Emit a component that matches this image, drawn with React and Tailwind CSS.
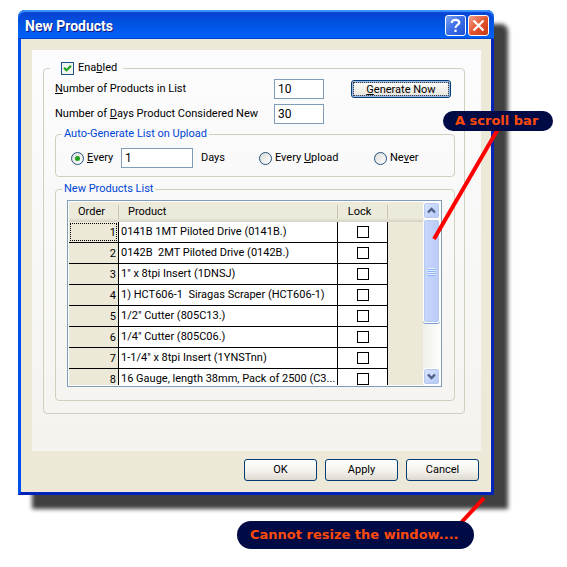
import React, { useState } from 'react';

const PRODUCTS = [
  '0141B 1MT Piloted Drive (0141B.)',
  '0142B  2MT Piloted Drive (0142B.)',
  '1" x 8tpi Insert (1DNSJ)',
  '1) HCT606-1  Siragas Scraper (HCT606-1)',
  '1/2" Cutter (805C13.)',
  '1/4" Cutter (805C06.)',
  '1-1/4" x 8tpi Insert (1YNSTnn)',
  '16 Gauge, length 38mm, Pack of 2500 (C3...',
];

const TextBox = ({ id, className, ...props }) => (
  <input
    id={id}
    type="text"
    className={`h-5 border border-[#7f9db9] bg-white pl-[3px] text-[12px] outline-none ${className}`}
    {...props}
  />
);

const Radio = ({ value, selected, onSelect, className, children }) => (
  <label className={`flex items-center gap-[3px] ${className}`}>
    <span className="grid h-[13px] w-[13px] shrink-0 place-items-center">
      <input
        type="radio"
        name="frequency"
        value={value}
        checked={selected === value}
        onChange={() => onSelect(value)}
        className="col-start-1 row-start-1 h-[13px] w-[13px] appearance-none rounded-full border border-[#21527f] bg-linear-to-br from-[#dcdcd7] to-white"
      />
      {selected === value && (
        <span className="pointer-events-none col-start-1 row-start-1 h-[5px] w-[5px] rounded-full bg-[#21a121]"></span>
      )}
    </span>
    <span>{children}</span>
  </label>
);

const Group = ({ title, className, children }) => (
  <fieldset className={`rounded-[4px] border border-[#d0d0bf] px-[6px] ${className}`}>
    <legend className="h-[14px] px-[2px] leading-[14px] text-[#0046d5]">{title}</legend>
    {children}
  </fieldset>
);

const DialogButton = ({ children }) => (
  <button
    type="button"
    className="h-[22px] w-[73px] rounded-[3px] border border-[#003c74] bg-linear-to-b from-white via-[#f5f4ef] to-[#dedad0]"
  >
    {children}
  </button>
);

const ScrollArrow = ({ label, d }) => (
  <button
    type="button"
    aria-label={label}
    className="grid h-[17px] w-[17px] shrink-0 place-items-center rounded-[3px] border border-white bg-linear-to-br from-[#dbe5ff] to-[#b3c7f7] ring-1 ring-[#b8c9ee] ring-inset"
  >
    <svg width="9" height="7" viewBox="0 0 9 7" fill="none" stroke="#4d6185" strokeWidth="2.4">
      <path d={d} />
    </svg>
  </button>
);

const ScrollBar = () => (
  <div className="flex w-[17px] shrink-0 flex-col bg-linear-to-r from-[#f0f0ea] to-[#fefefb]">
    <ScrollArrow label="Scroll up" d="M1 5.5 L4.5 2 L8 5.5" />
    <div className="flex h-[104px] flex-col items-center justify-center gap-px rounded-[3px] border border-white bg-linear-to-r from-[#c8d7fd] to-[#bacbf8] shadow-[0_1px_0_#7b9ad6] ring-1 ring-[#b8c9ee] ring-inset">
      <span className="h-px w-[7px] bg-[#eef4fe] shadow-[0_1px_0_#8cb0f8]"></span>
      <span className="h-px w-[7px] bg-[#eef4fe] shadow-[0_1px_0_#8cb0f8]"></span>
      <span className="h-px w-[7px] bg-[#eef4fe] shadow-[0_1px_0_#8cb0f8]"></span>
      <span className="h-px w-[7px] bg-[#eef4fe] shadow-[0_1px_0_#8cb0f8]"></span>
    </div>
    <div className="flex-1"></div>
    <ScrollArrow label="Scroll down" d="M1 1.5 L4.5 5 L8 1.5" />
  </div>
);

const ProductTable = () => (
  <div className="mt-1 mr-[6px] ml-[5px] flex h-[187px] overflow-hidden border border-[#7f9db9] bg-white p-px">
    <div className="flex-1 overflow-hidden bg-[#ece9d8]">
      <table className="w-full table-fixed border-separate border-spacing-0">
        <colgroup>
          <col className="w-[50px]" />
          <col />
          <col className="w-[50px]" />
          <col className="w-[35px]" />
        </colgroup>
        <thead>
          <tr className="h-5 bg-linear-to-b from-[#ebeadb] from-80% to-[#d6d2c2]">
            <th className="p-0 font-normal">
              <div className="border-r border-[#c7c5b2] pr-1 leading-[14px]">Order</div>
            </th>
            <th className="p-0 text-left font-normal">
              <div className="border-r border-[#c7c5b2] pl-[9px] leading-[14px]">Product</div>
            </th>
            <th className="p-0 font-normal">
              <div className="border-r border-[#c7c5b2] pr-[6px] leading-[14px]">Lock</div>
            </th>
            <th className="p-0"></th>
          </tr>
        </thead>
        <tbody>
          {PRODUCTS.map((name, i) => (
            <tr key={name} className="h-[21px]">
              <td className="border-r border-b border-black p-0 text-right">
                <div className={`mx-px h-[18px] border border-dotted leading-[18px] ${i === 0 ? 'border-black' : 'border-transparent'}`}>
                  {i + 1}
                </div>
              </td>
              <td className="border-r border-b border-black bg-white p-0 pl-[2px] leading-[20px] whitespace-pre">
                {name}
              </td>
              <td className="border-r border-b border-black bg-white p-0">
                <input
                  type="checkbox"
                  aria-label={`Lock ${name}`}
                  className="mx-auto block h-3 w-3 appearance-none border border-black bg-white"
                />
              </td>
              <td className="p-0"></td>
            </tr>
          ))}
        </tbody>
      </table>
    </div>
    <ScrollBar />
  </div>
);

const TitleBar = () => (
  <div className="flex h-[29px] items-center gap-[2px] rounded-t-[7px] bg-linear-to-b from-[#0a3fd0] via-[#0054e3] to-[#0062fa] pt-[2px] pr-[5px] pl-[7px] shadow-[inset_0_2px_1px_#3d95ff,inset_0_-1px_0_#0040c8]">
    <h1 className="flex-1 font-['Roboto',sans-serif] text-[14px] font-bold text-white [text-shadow:1px_1px_0_#0a1883]">
      New Products
    </h1>
    <button
      type="button"
      aria-label="Help"
      className="grid h-[21px] w-[21px] place-items-center rounded-[3px] border border-white bg-linear-to-br from-[#7ba2f0] via-[#3b6de8] to-[#1f4fd0]"
    >
      <svg width="15" height="15" viewBox="0 0 15 15" fill="none" stroke="white" strokeWidth="2.2">
        <path d="M3.8 5 C3.5 0.8 11.3 0.8 11.3 4.6 C11.3 7 7.5 6.8 7.5 10" />
        <path d="M7.5 11.6 V14" />
      </svg>
    </button>
    <button
      type="button"
      aria-label="Close"
      className="grid h-[21px] w-[21px] place-items-center rounded-[3px] border border-white bg-linear-to-br from-[#f0a08a] via-[#e2542f] to-[#c63a10]"
    >
      <svg width="13" height="13" viewBox="0 0 13 13" fill="none" stroke="white" strokeWidth="2.2">
        <path d="M1.5 1.5 L11.5 11.5 M11.5 1.5 L1.5 11.5" />
      </svg>
    </button>
  </div>
);

const Settings = () => {
  const [enabled, setEnabled] = useState(true);
  const [frequency, setFrequency] = useState('every');

  return (
    <fieldset className="rounded-[4px] border border-[#d0d0bf] pr-[9px] pb-3 pl-[11px]">
      <legend className="-ml-[5px] h-[14px] pr-[6px] pl-[11px]">
        <label className="flex h-[14px] items-center gap-1">
          <span className="grid h-[13px] w-[13px] place-items-center">
            <input
              type="checkbox"
              checked={enabled}
              onChange={() => setEnabled(!enabled)}
              className="col-start-1 row-start-1 h-[13px] w-[13px] appearance-none border border-[#1c5180] bg-[#f3f3ef]"
            />
            {enabled && (
              <svg className="pointer-events-none col-start-1 row-start-1" width="9" height="9" viewBox="0 0 9 9" fill="none" stroke="#21a121" strokeWidth="2.2">
                <path d="M1 3.8 L3.5 6.3 L8 1.8" />
              </svg>
            )}
          </span>
          <span>Ena<u>b</u>led</span>
        </label>
      </legend>

      <div className="mt-1 flex h-5 items-center">
        <label htmlFor="product-count" className="w-[219px]"><u>N</u>umber of Products in List</label>
        <TextBox id="product-count" className="w-[50px]" defaultValue="10" />
        <button
          type="button"
          className="ml-[27px] h-[18px] w-[100px] rounded-[3px] border border-[#003c74] bg-linear-to-b from-[#fdfdfb] to-[#e6e3da] p-px shadow-[inset_0_0_0_2px_#98b8ea]"
        >
          <span className="block h-[14px] border border-dotted border-[#4a4030] leading-[13px]"><u>G</u>enerate Now</span>
        </button>
      </div>
      <div className="mt-[5px] flex h-5 items-center">
        <label htmlFor="day-count" className="w-[219px]">Number of <u>D</u>ays Product Considered New</label>
        <TextBox id="day-count" className="w-[50px]" defaultValue="30" />
      </div>

      <Group title="Auto-Generate List on Upload" className="mt-[3px] pb-2">
        <div className="mt-[7px] flex h-5 items-center pl-[9px]">
          <Radio value="every" selected={frequency} onSelect={setFrequency} className="w-[50px]"><u>E</u>very</Radio>
          <TextBox id="interval" className="w-[72px]" defaultValue="1" />
          <label htmlFor="interval" className="w-[66px] pl-2">Days</label>
          <Radio value="upload" selected={frequency} onSelect={setFrequency} className="w-[115px]">Every <u>U</u>pload</Radio>
          <Radio value="never" selected={frequency} onSelect={setFrequency}>Ne<u>v</u>er</Radio>
        </div>
      </Group>

      <Group title="New Products List" className="mt-[5px] pb-[13px]">
        <ProductTable />
      </Group>
    </fieldset>
  );
};

const Callout = ({ className, children }) => (
  <div className={`absolute flex items-center rounded-full bg-[#000b45] font-['DejaVu_Sans',sans-serif] text-[13px] font-bold whitespace-nowrap text-[#ff4a0c] ${className}`}>
    {children}
  </div>
);

export default function App() {
  return (
    <main className="min-h-screen bg-white pt-[10px] pr-[73px] pb-[72px] pl-[18px] font-['Roboto',sans-serif] text-[11px] leading-[14px] text-black">
      <div className="relative">
        <section className="rounded-t-[7px] bg-[#0050ee] shadow-[14px_14px_4px_#404040]">
          <TitleBar />
          <div className="border-x-3 border-b-3 border-r-[#0024b8] border-b-[#0024b8] border-l-[#0050ee] bg-[#ece9d8] pt-[11px] pr-[10px] pb-[11px] pl-[11px]">
            <div className="bg-linear-to-b from-[#fcfcfe] to-[#f4f3ee] pt-[11px] pr-4 pb-[37px] pl-[11px]">
              <Settings />
            </div>
            <div className="mt-2 flex justify-end gap-2 pr-[2px]">
              <DialogButton>OK</DialogButton>
              <DialogButton>Apply</DialogButton>
              <DialogButton>Cancel</DialogButton>
            </div>
          </div>
        </section>

        {/* Notes over the window */}
        <svg className="pointer-events-none absolute top-[115px] -right-[10px]" width="80" height="120" viewBox="0 0 80 120" stroke="#ff0000" strokeWidth="4">
          <path d="M10 114 L74 4" />
        </svg>
        <Callout className="top-[101px] -right-[59px] h-5 w-[110px] pl-3">A scroll bar</Callout>

        <svg className="pointer-events-none absolute -bottom-[33px] right-0" width="40" height="34" viewBox="0 0 40 34" stroke="#ff0000" strokeWidth="4">
          <path d="M4 32 L30 4" />
        </svg>
        <Callout className="right-[20px] -bottom-[54px] h-7 w-[237px] pl-[13px]">Cannot resize the window....</Callout>
      </div>
    </main>
  );
}
